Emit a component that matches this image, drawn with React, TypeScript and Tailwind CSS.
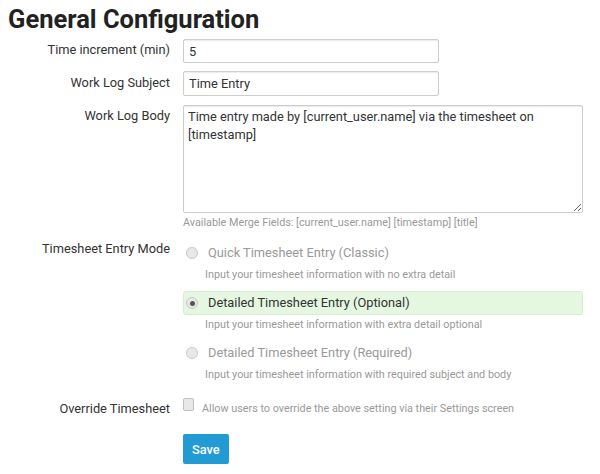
import { useState } from "react";

type Modo = "classic" | "optional" | "required";

const modos: { id: Modo; titulo: string; descricao: string }[] = [
  {
    id: "classic",
    titulo: "Quick Timesheet Entry (Classic)",
    descricao: "Input your timesheet information with no extra detail",
  },
  {
    id: "optional",
    titulo: "Detailed Timesheet Entry (Optional)",
    descricao: "Input your timesheet information with extra detail optional",
  },
  {
    id: "required",
    titulo: "Detailed Timesheet Entry (Required)",
    descricao: "Input your timesheet information with required subject and body",
  },
];

function Label({ children, className = "" }: { children: React.ReactNode; className?: string }) {
  return (
    <div className={`w-[170px] shrink-0 text-right text-[12.8px] text-[#333] ${className}`}>{children}</div>
  );
}

export default function App() {
  const [modo, setModo] = useState<Modo>("optional");
  const [override, setOverride] = useState(false);

  return (
    <div className="min-h-[474px] w-[600px] bg-white font-['Roboto',sans-serif] text-[#333]">
      <h1 className="pl-[8px] pt-[3px] text-[25.5px] font-bold leading-[32px] text-[#222]">General Configuration</h1>

      <div className="mt-[4px] flex flex-col">
        <div className="flex items-center gap-[13px]">
          <Label className="-mt-[2px]">Time increment (min)</Label>
          <input
            defaultValue="5"
            className="h-[24px] w-[256px] rounded-[2px] border border-[#ccc] px-[5px] text-[12.8px] text-[#333] shadow-[inset_0_1px_1px_rgba(0,0,0,0.08)] outline-none"
          />
        </div>

        <div className="mt-[8px] flex items-center gap-[13px]">
          <Label className="-mt-[2px]">Work Log Subject</Label>
          <input
            defaultValue="Time Entry"
            className="h-[25px] w-[256px] rounded-[2px] border border-[#ccc] px-[5px] text-[12.8px] text-[#333] shadow-[inset_0_1px_1px_rgba(0,0,0,0.08)] outline-none"
          />
        </div>

        <div className="mt-[9px] flex items-start gap-[13px]">
          <Label className="pt-[1px]">Work Log Body</Label>
          <div className="flex flex-col">
            <textarea
              defaultValue="Time entry made by [current_user.name] via the timesheet on [timestamp]"
              className="h-[108px] w-[400px] resize-y rounded-[2px] border border-[#ccc] px-[4px] py-[2px] text-[12.8px] leading-[18px] text-[#333] shadow-[inset_0_1px_1px_rgba(0,0,0,0.08)] outline-none"
            />
            <div className="mt-[3px] text-[10.8px] leading-[14px] text-[#999]">
              Available Merge Fields: [current_user.name] [timestamp] [title]
            </div>
          </div>
        </div>

        <div className="mt-[11px] flex items-start gap-[13px]">
          <Label className="-mt-[2px]">Timesheet Entry Mode</Label>
          <div className="flex w-[400px] flex-col">
            {modos.map((m, i) => {
              const ativo = modo === m.id;
              return (
                <div key={m.id} className={i > 0 ? "mt-[9px]" : ""}>
                  <label
                    onClick={() => setModo(m.id)}
                    className={`flex h-[24px] cursor-pointer items-center gap-[10px] rounded-[3px] border pl-[2px] text-[12.8px] ${
                      ativo ? "border-[#d3efcc] bg-[#e5f7e0] text-[#333]" : "border-transparent text-[#999]"
                    }`}
                  >
                    <span className="flex h-[12px] w-[12px] items-center justify-center rounded-full border border-[#c8c8c8] bg-[#e8e8e8]">
                      {ativo && <span className="h-[5px] w-[5px] rounded-full bg-[#555]" />}
                    </span>
                    {m.titulo}
                  </label>
                  <div className="mt-[3px] pl-[22px] text-[10.8px] leading-[14px] text-[#999]">{m.descricao}</div>
                </div>
              );
            })}
          </div>
        </div>

        <div className="mt-[17px] flex items-center gap-[13px]">
          <Label>Override Timesheet</Label>
          <label
            onClick={() => setOverride(!override)}
            className="flex cursor-pointer items-start gap-[8px] text-[10.8px] text-[#999]"
          >
            <span className="-mt-[3px] flex h-[13px] w-[11px] items-center justify-center rounded-[2px] border border-[#c0c0c0] bg-[#e8e8e8]">
              {override && <span className="text-[9px] leading-none text-[#555]">✓</span>}
            </span>
            Allow users to override the above setting via their Settings screen
          </label>
        </div>

        <div className="mt-[16px] pl-[183px]">
          <button className="h-[30px] rounded-[2px] bg-[#229bd5] px-[9px] text-[12.8px] font-medium text-white">
            Save
          </button>
        </div>
      </div>
    </div>
  );
}
